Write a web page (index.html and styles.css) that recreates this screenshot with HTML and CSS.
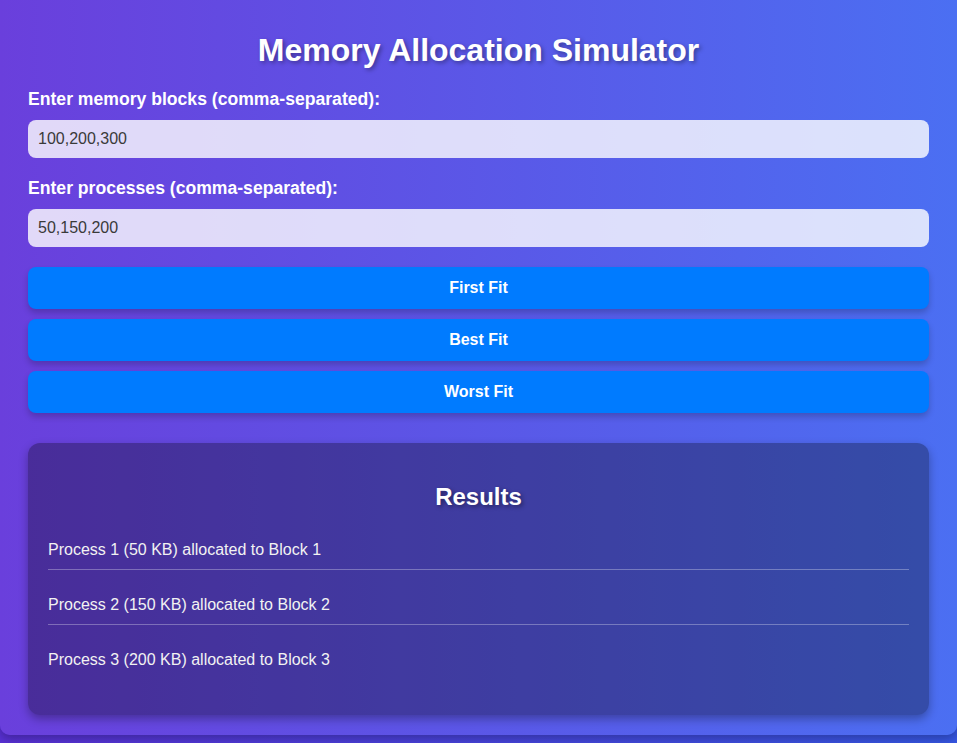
FILE: index.html
```html
<!DOCTYPE html>
<html lang="en">
<head>
<meta charset="utf-8">
<title>Memory Allocation Simulator</title>
<link rel="stylesheet" href="styles.css">
</head>
<body>
<div class="container">
  <h1 class="title">Memory Allocation Simulator</h1>
  <label class="label" for="blocks">Enter memory blocks (comma-separated):</label>
  <input class="field" id="blocks" type="text" value="100,200,300">
  <label class="label" for="procs">Enter processes (comma-separated):</label>
  <input class="field" id="procs" type="text" value="50,150,200">
  <div class="buttons">
    <button class="btn">First Fit</button>
    <button class="btn">Best Fit</button>
    <button class="btn">Worst Fit</button>
  </div>
  <div class="results">
    <h2 class="results-title">Results</h2>
    <p class="result-item">Process 1 (50 KB) allocated to Block 1</p>
    <p class="result-item">Process 2 (150 KB) allocated to Block 2</p>
    <p class="result-item last">Process 3 (200 KB) allocated to Block 3</p>
  </div>
</div>
</body>
</html>
```
FILE: styles.css
```css
* { box-sizing: border-box; }
html, body { margin: 0; padding: 0; }
body {
  min-height: 743px;
  font-family: "Liberation Sans", Arial, sans-serif;
  background: linear-gradient(to right, #5830d3, #3656e2);
  color: #fff;
}
.container {
  padding: 32px 28px 20px;
  border-radius: 0 0 10px 10px;
  background: linear-gradient(to right, #6a3fdc, #4b6ff2);
  box-shadow: 0 4px 10px rgba(0,0,0,0.25);
}
.title {
  margin: 0 0 20px;
  text-align: center;
  font-size: 32px;
  line-height: 37px;
  font-weight: bold;
  color: #fff;
  text-shadow: 2px 2px 4px rgba(0,0,0,0.35);
}
.label {
  display: block;
  font-size: 17.6px;
  line-height: 20px;
  font-weight: bold;
  margin-bottom: 11px;
}
.field {
  display: block;
  width: 100%;
  height: 38px;
  padding: 0 10px;
  margin: 0 0 20px;
  border: none;
  border-radius: 8px;
  background: rgba(255,255,255,0.8);
  font-family: "Liberation Sans", Arial, sans-serif;
  font-size: 16px;
  color: #3a3a3a;
  outline: none;
}
.buttons {
  display: flex;
  flex-direction: column;
  gap: 10px;
}
.btn {
  display: block;
  width: 100%;
  height: 42px;
  border: none;
  border-radius: 8px;
  background: #007bff;
  color: #fff;
  font-family: "Liberation Sans", Arial, sans-serif;
  font-size: 16px;
  font-weight: bold;
  box-shadow: 0 4px 6px rgba(0,0,0,0.2);
  cursor: pointer;
}
.results {
  margin-top: 30px;
  padding: 20px;
  border-radius: 12px;
  background: rgba(0,0,0,0.3);
  box-shadow: 0 4px 10px rgba(0,0,0,0.3);
}
.results-title {
  margin: 20px 0;
  text-align: center;
  font-size: 24px;
  line-height: 28px;
  font-weight: bold;
  text-shadow: 2px 2px 4px rgba(0,0,0,0.4);
}
.result-item {
  margin: 16px 0;
  padding: 10px 0;
  font-size: 16px;
  line-height: 18px;
  color: #f2f2f2;
  border-bottom: 1px solid rgba(255,255,255,0.3);
}
.result-item.last { border-bottom: none; }
```
